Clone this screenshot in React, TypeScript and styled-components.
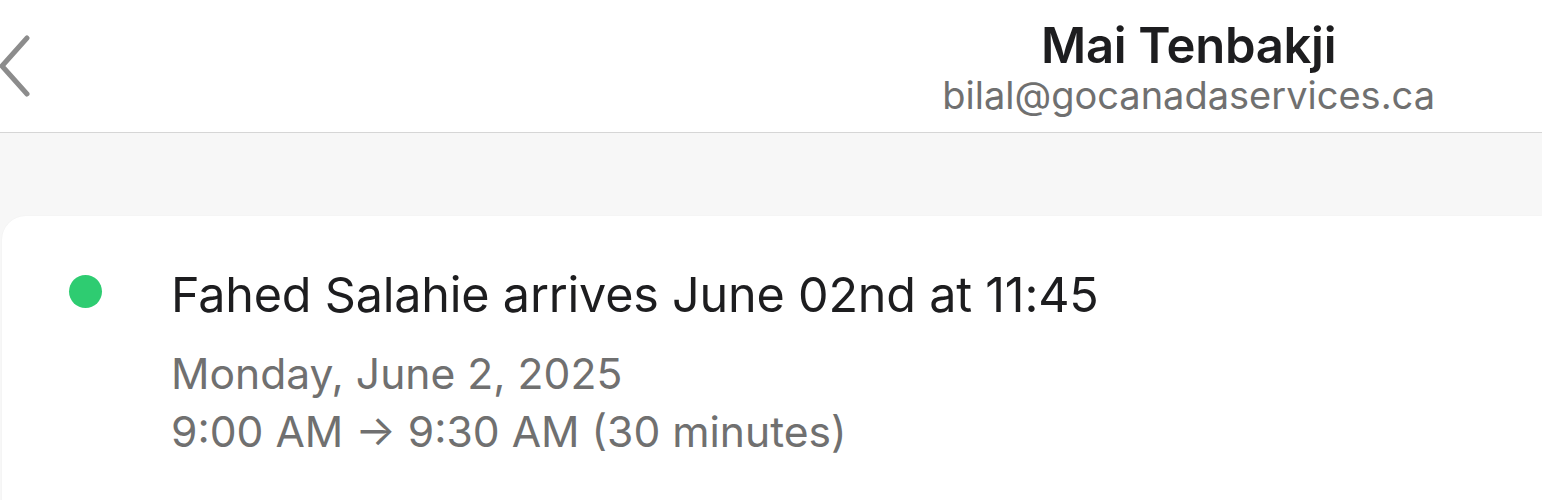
import React from "react";
import styled, { createGlobalStyle } from "styled-components";

const Global = createGlobalStyle`
  html, body { margin: 0; padding: 0; background: #f7f7f7; }
  body { font-family: Inter, "Noto Sans", sans-serif; -webkit-font-smoothing: antialiased; }
  * { box-sizing: border-box; }
`;

const Page = styled.div`
  width: 1542px;
  height: 500px;
  overflow: hidden;
  background: #f7f7f7;
`;

const Header = styled.header`
  height: 133px;
  background: #ffffff;
  border-bottom: 1px solid #d6d6d6;
  display: flex;
  align-items: flex-start;
`;

const BackButton = styled.button`
  border: none;
  background: none;
  padding: 0;
  margin-top: 31px;
  width: 40px;
  height: 70px;
  display: flex;
  align-items: center;
  cursor: pointer;
`;

const TitleBlock = styled.div`
  margin-left: auto;
  margin-right: 107px;
  padding-top: 19px;
  display: flex;
  flex-direction: column;
  align-items: center;
`;

const Title = styled.div`
  font-size: 49px;
  font-weight: 600;
  color: #1d1d1f;
  line-height: 54px;
  letter-spacing: -0.3px;
`;

const Subtitle = styled.div`
  font-size: 38px;
  font-weight: 400;
  color: #707070;
  line-height: 44px;
`;

const Body = styled.main`
  padding-top: 83px;
  padding-left: 2px;
`;

const Card = styled.section`
  background: #ffffff;
  border-radius: 24px 0 0 0;
  height: 300px;
  padding: 54px 0 0 0;
  display: grid;
  grid-template-columns: 169px 1fr;
  box-shadow: 0 0 2px rgba(0, 0, 0, 0.04);
`;

const DotCell = styled.div`
  display: flex;
  justify-content: flex-start;
  padding-left: 67px;
  padding-top: 5px;
`;

const Dot = styled.span<{ $color: string }>`
  width: 33px;
  height: 33px;
  border-radius: 50%;
  background: ${(p) => p.$color};
  display: block;
`;

const Content = styled.div`
  display: flex;
  flex-direction: column;
`;

const EventTitle = styled.div`
  font-size: 48.5px;
  line-height: 50px;
  color: #1d1d1f;
  font-weight: 400;
  letter-spacing: -0.2px;
  margin-bottom: 25px;
`;

const Meta = styled.div`
  font-size: 42.6px;
  line-height: 58px;
  color: #707070;
  font-weight: 400;
`;

export default function App() {
  return (
    <Page>
      <Global />
      <Header>
        <BackButton aria-label="Back">
          <svg width="34" height="64" viewBox="0 0 34 64" fill="none">
            <path d="M27 4 L2 32 L27 60" stroke="#8c8c8c" strokeWidth="5" strokeLinecap="round" strokeLinejoin="round" />
          </svg>
        </BackButton>
        <TitleBlock>
          <Title>Mai Tenbakji</Title>
          <Subtitle>bilal@gocanadaservices.ca</Subtitle>
        </TitleBlock>
      </Header>
      <Body>
        <Card>
          <DotCell>
            <Dot $color="#2ecc71" />
          </DotCell>
          <Content>
            <EventTitle>Fahed Salahie arrives June 02nd at 11:45</EventTitle>
            <Meta>Monday, June 2, 2025</Meta>
            <Meta>9:00 AM → 9:30 AM (30 minutes)</Meta>
          </Content>
        </Card>
      </Body>
    </Page>
  );
}
